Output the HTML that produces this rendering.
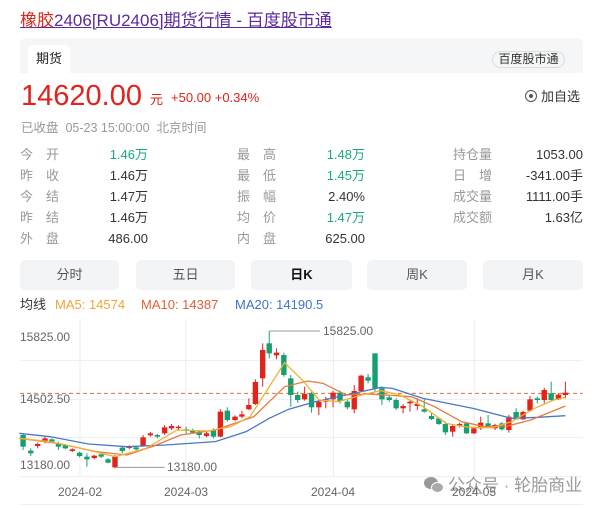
<!DOCTYPE html>
<html><head><meta charset="utf-8"><style>
*{margin:0;padding:0;box-sizing:border-box}
body{width:600px;height:508px;background:#fff;font-family:"Liberation Sans","Noto Sans CJK SC",sans-serif;position:relative;overflow:hidden;color:#333}
.a{position:absolute;white-space:nowrap;line-height:16px}
.title{left:20px;top:11px;font-size:17px;line-height:20px;color:#5c2a9d;text-decoration:underline}
.title span{color:#d9261c}
.card{left:20px;top:38px;width:563px;height:35px;background:#f5f6f7;border-radius:6px 6px 0 0}
.tab{left:28px;top:45px;width:42px;height:28px;background:#fff;border-radius:4px 4px 0 0;font-size:13px;color:#222;text-align:center;line-height:28px}
.badge{left:492px;top:51px;width:73px;height:17px;border:1px solid #ddd;border-radius:9px;font-size:12px;line-height:15px;text-align:center;color:#333;background:#f5f6f7}
.price{left:21px;top:80px;font-size:29px;line-height:32px;color:#e0231b}
.s{font-size:13px;color:#e0231b}
.gray{color:#999;font-size:12.5px}
.lb{font-size:13px;color:#999;letter-spacing:13px}
.lb3{font-size:13px;color:#999}
.v{font-size:13px;color:#333;text-align:right}
.g{color:#1aa883}
.btn{top:260px;height:30px;background:#f3f4f6;border-radius:5px;font-size:13px;color:#555;text-align:center;line-height:30px}
.ax{font-size:12px;color:#666}
</style></head><body>
<div class="a title"><span>橡胶</span>2406[RU2406]期货行情 - 百度股市通</div>
<div class="a card"></div>
<div class="a tab">期货</div>
<div class="a badge">百度股市通</div>
<div class="a price">14620.00</div>
<div class="a s" style="left:150px;top:92px">元</div>
<div class="a s" style="left:171px;top:90px">+50.00 +0.34%</div>
<div class="a" style="left:525px;top:89px;font-size:13px;color:#333"><span style="display:inline-block;width:12px;height:12px;border:1px solid #555;border-radius:50%;position:relative;top:1px;margin-right:4px"><span style="position:absolute;left:3px;top:3px;width:4px;height:4px;background:#555;border-radius:50%"></span></span>加自选</div>
<div class="a gray" style="left:21px;top:120px">已收盘&nbsp; 05-23 15:00:00&nbsp; 北京时间</div>

<div class="a lb" style="left:20px;top:147px">今开</div><div class="a v g" style="right:452px;top:147px">1.46万</div>
<div class="a lb" style="left:20px;top:168px">昨收</div><div class="a v" style="right:452px;top:168px">1.46万</div>
<div class="a lb" style="left:20px;top:189px">今结</div><div class="a v" style="right:452px;top:189px">1.47万</div>
<div class="a lb" style="left:20px;top:210px">昨结</div><div class="a v" style="right:452px;top:210px">1.46万</div>
<div class="a lb" style="left:20px;top:231px">外盘</div><div class="a v" style="right:452px;top:231px">486.00</div>

<div class="a lb" style="left:237px;top:147px">最高</div><div class="a v g" style="right:235px;top:147px">1.48万</div>
<div class="a lb" style="left:237px;top:168px">最低</div><div class="a v g" style="right:235px;top:168px">1.45万</div>
<div class="a lb" style="left:237px;top:189px">振幅</div><div class="a v" style="right:235px;top:189px">2.40%</div>
<div class="a lb" style="left:237px;top:210px">均价</div><div class="a v g" style="right:235px;top:210px">1.47万</div>
<div class="a lb" style="left:237px;top:231px">内盘</div><div class="a v" style="right:235px;top:231px">625.00</div>

<div class="a lb3" style="left:453px;top:147px">持仓量</div><div class="a v" style="right:17px;top:147px">1053.00</div>
<div class="a lb" style="left:453px;top:168px">日增</div><div class="a v" style="right:17px;top:168px">-341.00手</div>
<div class="a lb3" style="left:453px;top:189px">成交量</div><div class="a v" style="right:17px;top:189px">1111.00手</div>
<div class="a lb3" style="left:453px;top:210px">成交额</div><div class="a v" style="right:17px;top:210px">1.63亿</div>

<div class="a btn" style="left:20px;width:99px;line-height:30px">分时</div>
<div class="a btn" style="left:136px;width:99px;line-height:30px">五日</div>
<div class="a btn" style="left:251px;width:101px;color:#111;font-weight:bold;line-height:30px">日K</div>
<div class="a btn" style="left:367px;width:100px;line-height:30px">周K</div>
<div class="a btn" style="left:483px;width:100px;line-height:30px">月K</div>

<div class="a" style="left:20px;top:297px;font-size:13px;color:#333">均线</div>
<div class="a" style="left:55px;top:297px;font-size:13px;color:#f0a53a">MA5: 14574</div>
<div class="a" style="left:141px;top:297px;font-size:13px;color:#e0603a">MA10: 14387</div>
<div class="a" style="left:235px;top:297px;font-size:13px;color:#3f74c8">MA20: 14190.5</div>

<svg class="a" style="left:0;top:320px" width="600" height="188" viewBox="0 0 1560 564" preserveAspectRatio="none">
<g stroke="#eee" stroke-width="1">
<line x1="52" y1="122" x2="1515" y2="122" vector-effect="non-scaling-stroke"/>
<line x1="52" y1="238" x2="1515" y2="238" vector-effect="non-scaling-stroke"/>
<line x1="52" y1="353" x2="1515" y2="353" vector-effect="non-scaling-stroke"/>
<line x1="52" y1="470" x2="1515" y2="470" vector-effect="non-scaling-stroke"/>
<line x1="208" y1="0" x2="208" y2="470" vector-effect="non-scaling-stroke"/>
<line x1="483" y1="0" x2="483" y2="470" vector-effect="non-scaling-stroke"/>
<line x1="867" y1="0" x2="867" y2="470" vector-effect="non-scaling-stroke"/>
<line x1="1233" y1="0" x2="1233" y2="470" vector-effect="non-scaling-stroke"/>
<line x1="52" y1="553" x2="1515" y2="553" vector-effect="non-scaling-stroke"/>
</g>
<line x1="52" y1="220" x2="1515" y2="220" stroke="#e07030" stroke-width="1" stroke-dasharray="4 3" vector-effect="non-scaling-stroke"/>
<g id="c"></g>
<polyline fill="none" stroke="#4a78c6" stroke-width="1.3" vector-effect="non-scaling-stroke" points="50,340 130,350 230,372 330,380 430,375 560,365 640,335 700,295 750,268 820,245 900,225 990,202 1020,205 1100,235 1230,265 1330,295 1400,292 1470,287"/>
<polyline fill="none" stroke="#e87a3c" stroke-width="1.3" vector-effect="non-scaling-stroke" points="50,355 150,370 250,395 330,405 400,378 470,345 560,330 660,290 740,200 800,183 840,190 900,225 960,222 1070,230 1130,260 1200,305 1260,320 1320,318 1380,300 1470,258"/>
<polyline fill="none" stroke="#f2b035" stroke-width="1.3" vector-effect="non-scaling-stroke" points="50,355 130,365 200,382 300,410 380,385 460,330 540,333 600,320 650,290 700,200 740,128 790,185 830,240 880,245 940,225 990,212 1040,225 1100,260 1160,310 1220,322 1280,323 1330,305 1390,265 1440,240 1470,232"/>
<line x1="700" y1="33" x2="832" y2="33" stroke="#999" vector-effect="non-scaling-stroke"/>
<line x1="299" y1="442" x2="428" y2="442" stroke="#999" vector-effect="non-scaling-stroke"/>
</svg>
<div class="a ax" style="left:20px;top:329px">15825.00</div>
<div class="a ax" style="left:20px;top:391px">14502.50</div>
<div class="a ax" style="left:20px;top:457px">13180.00</div>
<div class="a ax" style="left:323px;top:323px">15825.00</div>
<div class="a ax" style="left:167px;top:459px">13180.00</div>
<div class="a ax" style="left:58px;top:484px">2024-02</div>
<div class="a ax" style="left:164px;top:484px">2024-03</div>
<div class="a ax" style="left:311px;top:484px">2024-04</div>
<div class="a ax" style="left:452px;top:484px">2024-05</div>
<div class="a" style="left:424px;top:475px;font-size:17px;line-height:20px;color:rgba(120,120,120,0.75)"><span style="display:inline-block;width:20px;height:16px;position:relative;top:2px;margin-right:4px"><span style="position:absolute;left:0;top:0;width:14px;height:12px;border-radius:50%;background:#999"></span><span style="position:absolute;left:7px;top:5px;width:13px;height:11px;border-radius:50%;background:#aaa;border:1px solid #fff"></span></span>公众号 · 轮胎商业</div>
<script>
var d=[[60,345,380,340,390,0],[80,392,400,385,408,0],[98,372,378,368,385,1],[117,355,365,350,370,1],[135,358,365,355,368,0],[152,370,380,365,390,0],[170,375,385,372,388,0],[188,388,393,385,396,1],[207,398,408,395,412,0],[226,410,418,400,440,0],[245,407,414,404,418,1],[263,403,410,400,414,0],[281,418,428,414,430,0],[299,410,442,405,445,1],[318,383,393,378,400,0],[336,380,384,376,388,1],[354,382,388,379,391,0],[372,352,378,345,380,1],[391,340,346,336,350,1],[409,345,350,342,355,0],[428,322,340,315,345,1],[446,318,325,312,330,1],[464,320,324,316,330,1],[484,328,332,320,340,0],[501,330,338,326,342,0],[518,335,345,330,355,0],[537,340,348,336,352,1],[555,330,350,325,355,0],[573,275,350,268,352,1],[591,272,300,262,305,0],[611,290,300,286,304,1],[629,283,290,272,295,1],[647,255,268,235,270,1],[664,186,252,178,255,1],[683,90,175,70,200,1],[700,70,100,33,115,0],[719,98,106,85,118,1],[738,105,165,98,170,0],[756,175,225,165,260,0],[774,225,240,215,248,0],[792,222,238,200,242,1],[810,220,262,215,278,0],[829,245,262,240,285,1],[847,238,245,230,265,1],[866,218,238,212,262,1],[884,218,243,212,250,0],[903,245,262,240,268,0],[921,213,268,195,280,1],[939,167,213,164,216,1],[957,172,182,162,190,0],[975,100,205,100,218,0],[993,205,238,200,255,0],[1012,232,240,225,245,0],[1030,240,265,235,270,0],[1048,258,265,252,280,1],[1066,245,250,240,275,1],[1085,252,258,235,270,1],[1103,268,275,238,278,0],[1122,288,297,280,300,0],[1141,295,312,292,315,0],[1158,312,337,305,345,0],[1177,318,335,315,350,1],[1195,312,318,308,322,1],[1213,310,340,306,342,0],[1232,325,340,322,342,1],[1250,308,325,290,330,1],[1269,310,318,285,325,0],[1287,315,325,312,330,1],[1305,310,328,306,332,0],[1323,290,330,285,338,1],[1342,276,298,265,300,0],[1360,276,298,272,300,1],[1378,238,272,228,275,1],[1397,235,240,230,250,0],[1415,210,240,203,250,1],[1433,220,240,185,245,0],[1452,224,238,220,240,1],[1470,218,225,185,235,1]];
var s='';d.forEach(function(c){var col=c[5]?'#e3231b':'#16a070';s+='<line x1="'+c[0]+'" x2="'+c[0]+'" y1="'+c[3]+'" y2="'+c[4]+'" stroke="'+col+'" stroke-width="1" vector-effect="non-scaling-stroke"/><rect x="'+(c[0]-7)+'" y="'+c[1]+'" width="14" height="'+Math.max(3,c[2]-c[1])+'" fill="'+col+'"/>';});
document.getElementById('c').innerHTML=s;
</script>
</body></html>
